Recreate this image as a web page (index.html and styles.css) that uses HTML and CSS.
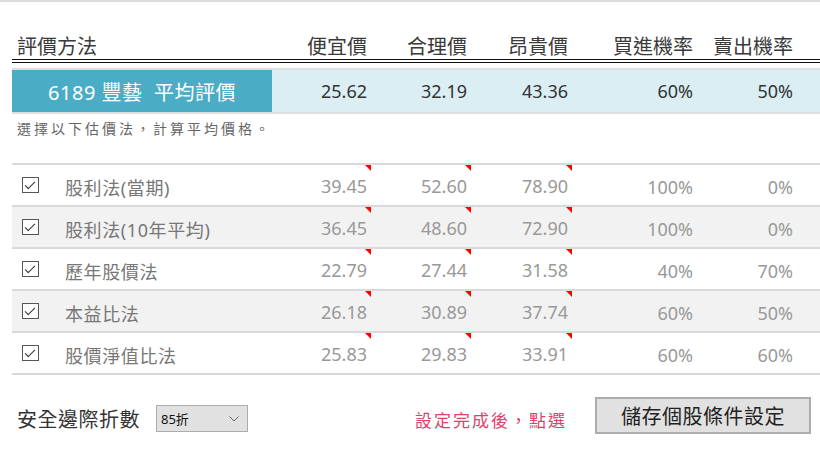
FILE: index.html
```html
<!DOCTYPE html>
<html lang="zh-TW">
<head>
    <meta charset="UTF-8">
    <title>評價方法</title>
    <link rel="stylesheet" href="styles.css">
</head>
<body>
    <div class="page">

        <!-- 標題列 -->
        <div class="row head">
            <div class="name">評價方法</div>
            <div class="num">便宜價</div>
            <div class="num">合理價</div>
            <div class="num">昂貴價</div>
            <div class="num">買進機率</div>
            <div class="num">賣出機率</div>
            <div></div>
        </div>

        <!-- 平均評價 -->
        <div class="row avg">
            <div class="name">6189 豐藝&nbsp; 平均評價</div>
            <div class="num">25.62</div>
            <div class="num">32.19</div>
            <div class="num">43.36</div>
            <div class="num">60%</div>
            <div class="num">50%</div>
            <div></div>
        </div>
        <p class="hint">選擇以下估價法，計算平均價格。</p>

        <!-- 估價法列表 -->
        <div class="list">
            <div class="row item">
                <div class="name"><span class="check"></span>股利法(當期)</div>
                <div class="num mark">39.45</div>
                <div class="num mark">52.60</div>
                <div class="num mark">78.90</div>
                <div class="num">100%</div>
                <div class="num">0%</div>
                <div></div>
            </div>
            <div class="row item alt">
                <div class="name"><span class="check"></span>股利法(10年平均)</div>
                <div class="num mark">36.45</div>
                <div class="num mark">48.60</div>
                <div class="num mark">72.90</div>
                <div class="num">100%</div>
                <div class="num">0%</div>
                <div></div>
            </div>
            <div class="row item">
                <div class="name"><span class="check"></span>歷年股價法</div>
                <div class="num mark">22.79</div>
                <div class="num mark">27.44</div>
                <div class="num mark">31.58</div>
                <div class="num">40%</div>
                <div class="num">70%</div>
                <div></div>
            </div>
            <div class="row item alt">
                <div class="name"><span class="check"></span>本益比法</div>
                <div class="num mark">26.18</div>
                <div class="num mark">30.89</div>
                <div class="num mark">37.74</div>
                <div class="num">60%</div>
                <div class="num">50%</div>
                <div></div>
            </div>
            <div class="row item">
                <div class="name"><span class="check"></span>股價淨值比法</div>
                <div class="num mark">25.83</div>
                <div class="num mark">29.83</div>
                <div class="num mark">33.91</div>
                <div class="num">60%</div>
                <div class="num">60%</div>
                <div></div>
            </div>
        </div>

        <!-- 底部設定 -->
        <div class="footer">
            <span class="label">安全邊際折數</span>
            <span class="selectWrap">
                <select class="discount">
                    <option>85折</option>
                    <option>80折</option>
                    <option>75折</option>
                </select>
                <svg class="arrow" width="10" height="6" viewBox="0 0 10 6"><path d="M0.5 0.5 L5 5 L9.5 0.5" fill="none" stroke="#666" stroke-width="1"/></svg>
            </span>
            <span class="notice">設定完成後，點選</span>
            <button class="save">儲存個股條件設定</button>
        </div>

    </div>
</body>
</html>
```

FILE: styles.css
```css
body {
    margin: 0;
    font-family: "Noto Sans", "Noto Sans CJK TC", sans-serif;
    background-color: #fff;
    color: #333;
}
.page {
    border-top: 2px solid #dcdcdc;
    padding-left: 12px;
    height: 447px;
    overflow: hidden;
}
.row {
    display: grid;
    grid-template-columns: 260px 99px 100px 101px 125px 100px 1fr;
}
.num {
    text-align: right;
    padding-right: 4px;
}
.head {
    margin-top: 30px;
    height: 27px;
    align-items: end;
    font-size: 20px;
    line-height: 25px;
    color: #3a3a3a;
    border-bottom: 4px double #111;
}
.head .name {
    padding-left: 5px;
}
.avg {
    margin-top: 5px;
    height: 42px;
    align-items: center;
    background-color: #daeef3;
    border-top: 2px solid #dedede;
    border-bottom: 2px solid #dedede;
    font-size: 18px;
    color: #333;
}
.avg .name {
    height: 100%;
    display: flex;
    align-items: center;
    justify-content: center;
    background-color: #4bacc6;
    color: #fff;
    font-size: 20px;
    letter-spacing: 0.5px;
}
.hint {
    margin: 5px 0 0 5px;
    font-size: 14px;
    letter-spacing: 3px;
    color: #666;
    line-height: 20px;
}
.list {
    margin-top: 24px;
    border-bottom: 2px solid #d9d9d9;
}
.item {
    height: 40px;
    align-items: center;
    border-top: 2px solid #d9d9d9;
    font-size: 18px;
    color: #999;
}
.item.alt {
    background-color: #f2f2f2;
}
.item .name {
    display: flex;
    align-items: center;
    color: #777;
    letter-spacing: 0.6px;
    padding-top: 2px;
}
.check {
    box-sizing: border-box;
    width: 17px;
    height: 16px;
    border: 1.5px solid #555;
    margin: 0 26px 5px 10px;
    background-color: #fff;
    position: relative;
}
.check::after {
    content: "";
    position: absolute;
    left: 2px;
    top: 2px;
    width: 9px;
    height: 4px;
    border-left: 1.5px solid #333;
    border-bottom: 1.5px solid #333;
    transform: rotate(-45deg) translate(-1px, 1px);
}
.mark {
    position: relative;
    height: 100%;
    line-height: 42px;
}
.mark::after {
    content: "";
    position: absolute;
    top: 0;
    right: 0;
    width: 6px;
    height: 6px;
    background-color: #ff0000;
    clip-path: polygon(0 0, 100% 0, 100% 100%);
}
.item .num {
    padding-top: 2px;
}
.item .mark {
    padding-top: 0;
}
.footer {
    display: flex;
    align-items: center;
    margin-top: 22px;
    padding-left: 5px;
}
.label {
    font-size: 20px;
    letter-spacing: 0.5px;
    color: #333;
    margin-top: 6px;
}
.selectWrap {
    position: relative;
    margin-left: 16px;
    margin-top: 6px;
    display: flex;
}
.discount {
    appearance: none;
    width: 92px;
    height: 27px;
    padding: 0 4px;
    font-family: "Noto Sans", "Noto Sans CJK TC", sans-serif;
    font-size: 13px;
    background-color: #e1e1e1;
    border: 1.5px solid #adadad;
    border-radius: 0;
    color: #111;
}
.arrow {
    position: absolute;
    right: 9px;
    top: 11px;
}
.notice {
    margin-left: 167px;
    font-size: 17px;
    letter-spacing: 2px;
    color: #e2406c;
    margin-top: 8px;
}
.save {
    margin-left: 28px;
    width: 216px;
    height: 37px;
    background-color: #e1e1e1;
    border: 2px solid #adadad;
    font-family: "Noto Sans", "Noto Sans CJK TC", sans-serif;
    font-size: 20px;
    letter-spacing: 0.5px;
    color: #222;
    cursor: pointer;
}
```
